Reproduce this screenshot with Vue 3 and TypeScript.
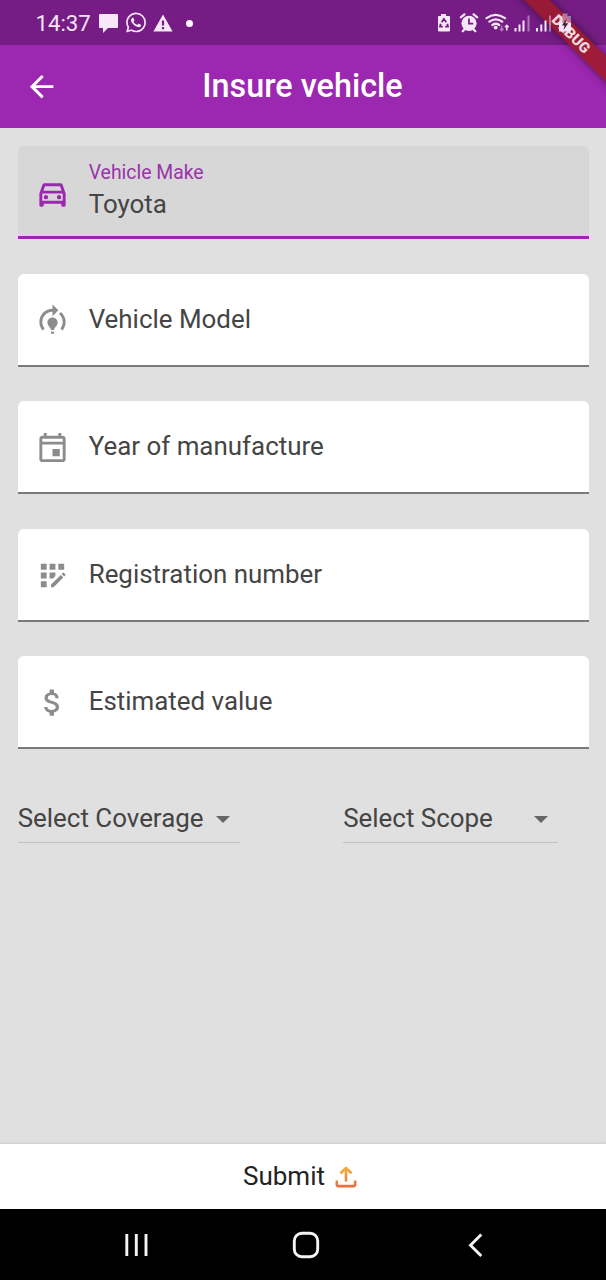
<script setup lang="ts">
import { ref } from 'vue'

interface Field {
  label: string
  value: string
  paths: string[]
}

const active = ref<number>(0)

const fields = ref<Field[]>([
  {
    label: 'Vehicle Make',
    value: 'Toyota',
    paths: [
      'M18.92 6.01C18.72 5.42 18.16 5 17.5 5h-11c-.66 0-1.21.42-1.42 1.01L3 12v8c0 .55.45 1 1 1h1c.55 0 1-.45 1-1v-1h12v1c0 .55.45 1 1 1h1c.55 0 1-.45 1-1v-8l-2.08-5.99zM6.85 7h10.29l1.08 3.11H5.77L6.85 7zM19 17H5v-5h14v5z',
      'M6 14.5a1.5 1.5 0 1 0 3 0a1.5 1.5 0 1 0 -3 0zM15 14.5a1.5 1.5 0 1 0 3 0a1.5 1.5 0 1 0 -3 0z',
    ],
  },
  {
    label: 'Vehicle Model',
    value: '',
    paths: [
      'M15.5 13.5c0 2-2.5 3.5-2.5 5h-2c0-1.5-2.5-3-2.5-5C8.5 11.57 10.07 10 12 10s3.5 1.57 3.5 3.5zM13 19.5h-2V21h2v-1.5z',
      'M19 13c0 1.68-.59 3.21-1.58 4.42l1.42 1.42C20.18 17.27 21 15.23 21 13c0-2.74-1.23-5.19-3.16-6.84l-1.42 1.42C17.99 8.86 19 10.82 19 13z',
      'M16 5l-4-4v3c-4.97 0-9 4.03-9 9 0 2.23.82 4.27 2.16 5.84l1.42-1.42C5.59 16.21 5 14.68 5 13c0-3.86 3.14-7 7-7v3l4-4z',
    ],
  },
  {
    label: 'Year of manufacture',
    value: '',
    paths: [
      'M19 4h-1V2h-2v2H8V2H6v2H5c-1.11 0-1.99.9-1.99 2L3 20c0 1.1.89 2 2 2h14c1.1 0 2-.9 2-2V6c0-1.1-.9-2-2-2zm0 16H5V10h14v10zm0-12H5V6h14v2zm-7 5h5v5h-5z',
    ],
  },
  {
    label: 'Registration number',
    value: '',
    paths: [
      'M10 4h4v4h-4zM4 16h4v4H4zM4 10h4v4H4zM4 4h4v4H4zM16 4h4v4h-4zM14 12.42V10h-4v4h2.42z',
      'M20.88 11.29l-1.17-1.17c-.16-.16-.42-.16-.58 0l-.88.88L20 12.75l.88-.88c.16-.16.16-.42 0-.58zM11 18.25V20h1.75l6.67-6.67-1.75-1.75z',
    ],
  },
  {
    label: 'Estimated value',
    value: '',
    paths: [
      'M11.8 10.9c-2.27-.59-3-1.2-3-2.15 0-1.09 1.01-1.85 2.7-1.85 1.78 0 2.44.85 2.5 2.1h2.21c-.07-1.72-1.12-3.3-3.21-3.81V3h-3v2.16c-1.94.42-3.5 1.68-3.5 3.61 0 2.31 1.91 3.46 4.7 4.13 2.5.6 3 1.48 3 2.41 0 .69-.49 1.79-2.7 1.79-2.06 0-2.87-.92-2.98-2.1h-2.2c.12 2.19 1.76 3.42 3.68 3.83V21h3v-2.15c1.95-.37 3.5-1.5 3.5-3.55 0-2.84-2.43-3.81-4.7-4.4z',
    ],
  },
])
</script>

<template>
  <div class="screen">
    <div class="banner"><span>DEBUG</span></div>

    <header class="status">
      <div class="status-left">
        <span class="clock">14:37</span>
        <svg class="chat" viewBox="0 0 19 19"><path d="M1 0h17q1 0 1 1v12q0 1-1 1H9l-5 5v-5H1q-1 0-1-1V1q0-1 1-1z" /></svg>
        <svg class="whatsapp" viewBox="0 0 24 24"><path d="M17.472 14.382c-.297-.149-1.758-.867-2.03-.967-.273-.099-.471-.148-.67.15-.197.297-.767.966-.94 1.164-.173.199-.347.223-.644.075-.297-.15-1.255-.463-2.39-1.475-.883-.788-1.48-1.761-1.653-2.059-.173-.297-.018-.458.13-.606.134-.133.298-.347.446-.52.149-.174.198-.298.298-.497.099-.198.05-.371-.025-.52-.075-.149-.669-1.612-.916-2.207-.242-.579-.487-.5-.669-.51-.173-.008-.371-.01-.57-.01-.198 0-.52.074-.792.372-.272.297-1.04 1.016-1.04 2.479 0 1.462 1.065 2.875 1.213 3.074.149.198 2.096 3.2 5.077 4.487.709.306 1.262.489 1.694.625.712.227 1.36.195 1.871.118.571-.085 1.758-.719 2.006-1.413.248-.694.248-1.289.173-1.413-.074-.124-.272-.198-.57-.347m-5.421 7.403h-.004a9.87 9.87 0 01-5.031-1.378l-.361-.214-3.741.982.998-3.648-.235-.374a9.86 9.86 0 01-1.51-5.26c.001-5.45 4.436-9.884 9.888-9.884 2.64 0 5.122 1.03 6.988 2.898a9.825 9.825 0 012.893 6.994c-.003 5.45-4.437 9.884-9.885 9.884m8.413-18.297A11.815 11.815 0 0012.05 0C5.495 0 .16 5.335.157 11.892c0 2.096.547 4.142 1.588 5.945L.057 24l6.305-1.654a11.882 11.882 0 005.683 1.448h.005c6.554 0 11.89-5.335 11.893-11.893a11.821 11.821 0 00-3.48-8.413z" /></svg>
        <svg class="warning" viewBox="0 0 20 18"><path fill-rule="evenodd" d="M10 0.5L19.6 17.4H0.4zM8.9 6.5v5h2.2v-5zM8.9 13v2.2h2.2V13z" /></svg>
        <i class="dot"></i>
      </div>
      <svg class="status-right" viewBox="0 0 140 24">
        <!-- battery saver -->
        <path d="M5 1h5v2h3q1 0 1 1v13.500q0 1-1 1H3q-1 0-1-1V4q0-1 1-1h2z" />
        <path class="cut" d="M5.600 9.200L7.900 6l2.300 3.200M11.300 10.700L12 13.700H9.200M6.800 13.700H4L4.700 10.700" />
        <!-- alarm -->
        <circle cx="33" cy="10.300" r="7.600" />
        <path class="line" d="M24.800 4.300l3.600-3M41.200 4.300l-3.600-3M28.700 16.300l-2 2M37.300 16.300l2 2" />
        <path class="cut" d="M33 5.500v5.200h4.200" />
        <!-- wifi -->
        <path class="line" d="M50.500 5.200q9-6.800 18.500 0M53.400 8.700q6.400-4.700 12.800 0M56.400 12q3.400-2.500 6.800 0" />
        <circle cx="59.700" cy="14.600" r="1.900" />
        <path class="thin dim" d="M65.700 12.500v5M63.900 15.700l1.800 1.900 1.800-1.900" />
        <path class="thin" d="M70.800 17.500v-5M69 14.300l1.800-1.900 1.800 1.900" />
        <!-- signal bars -->
        <path d="M78.500 15h2v3.500h-2zM82.500 11.500h2v7h-2zM86.500 7.500h2v11h-2z" />
        <path class="dim" d="M91.500 2.500h2v16h-2z" />
        <path d="M100 15h2v3.500h-2zM104.300 11.500h2v7h-2zM108.500 7.500h2v11h-2z" />
        <path class="dim" d="M113 2.500h2v16h-2z" />
        <!-- charging battery -->
        <path class="dim" d="M126.500 0.500h5v2.500h3.500V9.500h-12V3h3.500z" />
        <path d="M123 9.500h12v9h-12z" />
        <path class="bolt" d="M130.500 5.500l-4.500 7h2.500l-1 4.500 4.800-6.800h-2.700z" />
      </svg>
    </header>

    <div class="appbar">
      <svg class="back" viewBox="0 0 24 24"><path d="M20 11H7.830l5.590-5.590L12 4l-8 8 8 8 1.410-1.410L7.830 13H20v-2z" /></svg>
      <h1>Insure vehicle</h1>
    </div>

    <main class="form">
      <div
        v-for="(field, i) in fields"
        :key="field.label"
        class="field"
        :class="{ active: i === active }"
        @click="active = i"
      >
        <svg viewBox="0 0 24 24"><path v-for="d in field.paths" :key="d" :d="d" /></svg>
        <div class="text">
          <span :class="field.value ? 'caption' : 'placeholder'">{{ field.label }}</span>
          <span v-if="field.value" class="value">{{ field.value }}</span>
        </div>
      </div>

      <div class="selects">
        <div class="select coverage">
          <span>Select Coverage</span>
          <i class="caret"></i>
        </div>
        <div class="select scope">
          <span>Select Scope</span>
          <i class="caret"></i>
        </div>
      </div>
    </main>

    <button class="submit" type="button">
      <span>Submit</span>
      <svg viewBox="0 0 22 22">
        <defs>
          <linearGradient id="warm" gradientUnits="userSpaceOnUse" x1="0" y1="0" x2="0" y2="22">
            <stop offset="0" stop-color="#f3b43c" />
            <stop offset="1" stop-color="#e96a3c" />
          </linearGradient>
        </defs>
        <path d="M11 14.500V2.500M6.300 6.500L11 1.900l4.700 4.600M1.800 15.500v2.800q0 1.800 1.800 1.800h14.800q1.800 0 1.800-1.800v-2.800" />
      </svg>
    </button>

    <nav class="navbar">
      <svg class="recents" viewBox="0 0 24 24"><path d="M2.800 1v22M12.300 1v22M22 1v22" /></svg>
      <svg class="home" viewBox="0 0 28 28"><rect x="2.300" y="2.300" width="23.400" height="23.400" rx="7.500" /></svg>
      <svg class="prev" viewBox="0 0 16 26"><path d="M13.300 2.500L2.500 13.300l10.800 10.700" /></svg>
    </nav>
  </div>
</template>

<style>
body {
  margin: 0;
  background: #e0e0e0;
}
</style>

<style scoped>
.screen {
  position: relative;
  display: flex;
  flex-direction: column;
  width: 606px;
  height: 1280px;
  overflow: hidden;
  background: #e0e0e0;
  font-family: Roboto, "Liberation Sans", sans-serif;
  color: #444;
}

.status {
  flex: none;
  display: flex;
  justify-content: space-between;
  height: 45px;
  box-sizing: border-box;
  padding: 12px 30px 0 35.500px;
  background: #751d84;
  fill: #f8e6fa;
}

.status-left {
  display: flex;
  align-items: center;
  height: 23px;
}

.clock {
  width: 63.500px;
  font-size: 22.200px;
  line-height: 23px;
  color: #f8e4fa;
}

.chat {
  width: 19px;
  height: 19px;
}

.whatsapp {
  width: 20px;
  height: 21px;
  margin-left: 7.500px;
  margin-top: -2px;
}

.warning {
  width: 20px;
  height: 18px;
  margin-left: 7px;
  margin-top: -1px;
}

.dot {
  width: 7px;
  height: 7px;
  margin-left: 13px;
  border-radius: 50%;
  background: #fff;
}

.status-right {
  position: relative;
  z-index: 3;
  width: 140px;
  height: 24px;
  margin-top: 1px;
}

.line {
  fill: none;
  stroke: #f8e6fa;
  stroke-width: 2.200;
  stroke-linecap: round;
}

.thin {
  fill: none;
  stroke: #f8e6fa;
  stroke-width: 1.500;
}

.cut {
  fill: none;
  stroke: #751d84;
  stroke-width: 1.800;
}

.dim {
  opacity: 0.45;
}

.bolt {
  fill: #3c2030;
}

.banner {
  position: absolute;
  z-index: 2;
  top: 25px;
  left: 481px;
  width: 180px;
  height: 18px;
  transform: rotate(45deg);
  background: rgba(160, 26, 38, 0.86);
  box-shadow: 0 0 9px rgba(0, 0, 0, 0.5);
  text-align: center;
  font-size: 14.800px;
  font-weight: 900;
  line-height: 18px;
  color: #eed9dc;
}

.appbar {
  flex: none;
  display: flex;
  align-items: center;
  height: 83px;
  background: #9c27b0;
}

.back {
  width: 35.300px;
  height: 35.300px;
  margin-left: 23.500px;
  margin-top: 1px;
  fill: #fff;
}

h1 {
  margin: 0 0 2px 143.500px;
  font-size: 32.400px;
  font-weight: 500;
  line-height: 40px;
  white-space: nowrap;
  color: #fff;
}

.form {
  flex: 1;
  display: flex;
  flex-direction: column;
  gap: 34.500px;
  padding: 18px 17.500px 0 17.700px;
}

.field {
  flex: none;
  display: flex;
  align-items: center;
  height: 93px;
  box-sizing: border-box;
  border-bottom: 2px solid #7a7a7a;
  border-radius: 6px 6px 0 0;
  background: #fff;
  fill: #8c8c8c;
}

.field.active {
  border-bottom: 3px solid #9c27b0;
  background: #d7d7d7;
  fill: #9c27b0;
}

.field svg {
  width: 35px;
  height: 35px;
  margin: 2px 18.300px 0 17.700px;
}

.field.active svg {
  margin-top: 4px;
}

.text {
  display: flex;
  flex-direction: column;
  white-space: nowrap;
}

.placeholder,
.value {
  font-size: 25.920px;
  line-height: 30px;
  color: #454545;
}

.placeholder {
  margin-bottom: 1px;
}

.caption {
  margin-top: -2px;
  font-size: 19.400px;
  line-height: 24px;
  color: #9934aa;
}

.value {
  margin-top: 4px;
}

.selects {
  display: flex;
  justify-content: space-between;
  margin-top: 20.500px;
  padding-right: 30.500px;
}

.select {
  display: flex;
  align-items: center;
  justify-content: space-between;
  height: 39px;
  box-sizing: border-box;
  padding-bottom: 9px;
  border-bottom: 1px solid #c2c2c2;
  font-size: 25.920px;
  line-height: 30px;
  white-space: nowrap;
}

.select span {
  margin-bottom: 2px;
}

.coverage {
  width: 222.500px;
}

.scope {
  width: 214.800px;
}

.caret {
  margin: 2px 10px 0 0;
  border: 7.500px solid transparent;
  border-top-color: #666;
  border-bottom: 0;
}

.submit {
  flex: none;
  display: flex;
  align-items: center;
  justify-content: center;
  gap: 10px;
  height: 65px;
  padding: 0 6px 1px 0;
  border: 0;
  background: #fff;
  box-shadow: 0 -1px 2px rgba(0, 0, 0, 0.1);
  font-family: inherit;
  font-size: 26px;
  line-height: 30px;
  color: #222;
}

.submit svg {
  width: 22px;
  height: 22px;
  margin-top: 2px;
  fill: none;
  stroke: url(#warm);
  stroke-width: 2.600;
  stroke-linecap: round;
  stroke-linejoin: round;
}

.navbar {
  flex: none;
  display: flex;
  align-items: center;
  height: 71px;
  box-sizing: border-box;
  padding: 1px 0 0 124px;
  background: #000;
  fill: none;
  stroke: #f4f4f4;
  stroke-width: 2.900;
}

.recents {
  width: 24px;
  height: 24px;
}

.home {
  width: 28px;
  height: 28px;
  margin-left: 143.500px;
}

.prev {
  width: 16px;
  height: 26px;
  margin-left: 148px;
}
</style>
